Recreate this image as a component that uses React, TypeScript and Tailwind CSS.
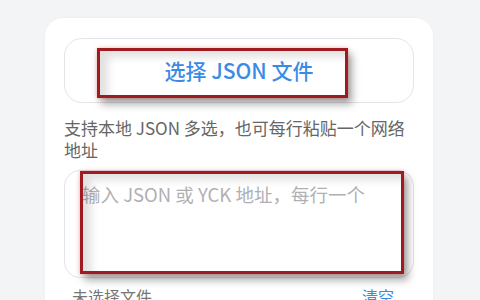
import React from "react";

const font = { fontFamily: '"Noto Sans CJK SC", "Noto Sans", sans-serif' };

function Mark({ className }: { className: string }) {
  return (
    <div
      className={`pointer-events-none absolute border-[3px] border-[#9e1b1f] ${className}`}
      style={{
        boxShadow:
          "4px 6px 8px rgba(0,0,0,0.35), 0 0 4px rgba(230,60,60,0.35), inset 8px 6px 8px rgba(0,0,0,0.12)",
      }}
    />
  );
}

export default function App() {
  return (
    <div className="h-[300px] w-[480px] overflow-hidden bg-[#f3f4f6] pt-[18px]" style={font}>
      <div className="ml-[45px] h-[320px] w-[388px] rounded-[18px] bg-white px-[19px] pt-[20px] shadow-[0_0_3px_rgba(0,0,0,0.04)]">
        <div className="relative flex h-[65px] items-center justify-center rounded-[18px] border border-[#e3e4e8] bg-white">
          <span className="text-[21px] font-medium text-[#3b8be6]">选择 JSON 文件</span>
          <Mark className="left-[32px] top-[9px] h-[50px] w-[251px]" />
        </div>
        <p className="mt-[14px] text-[17px] leading-[22px] text-[#666]">
          支持本地 JSON 多选，也可每行粘贴一个网络地址
        </p>
        <div className="relative mt-[9px] h-[108px] rounded-[16px] border border-[#e3e4e8] bg-white px-[17px] pt-[10px]">
          <span className="text-[18.5px] leading-[26px] text-[#b0b0b4]">输入 JSON 或 YCK 地址，每行一个</span>
          <Mark className="left-[15px] top-0 h-[103px] w-[324px]" />
        </div>
        <div className="mt-[7px] flex items-center justify-between pl-[8px] pr-[20px] text-[16px] leading-[22px]">
          <span className="text-[#777]">未选择文件</span>
          <span className="text-[#3b8be6]">清空</span>
        </div>
      </div>
    </div>
  );
}
